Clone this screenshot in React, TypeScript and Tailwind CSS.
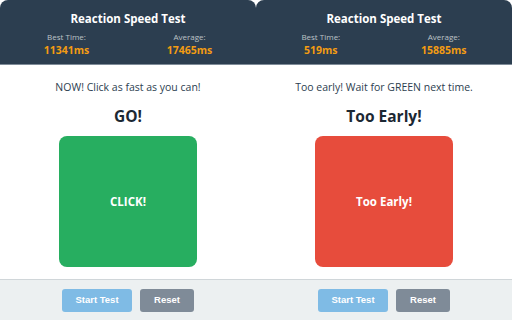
import React from "react";

type PanelProps = {
  best: string;
  avg: string;
  message: string;
  status: string;
  boxText: string;
  boxColor: string;
};

function Panel({ best, avg, message, status, boxText, boxColor }: PanelProps) {
  return (
    <div className="w-[256px] h-[320px] flex flex-col overflow-hidden" style={{ fontFamily: '"Open Sans", "Noto Sans", sans-serif' }}>
      <div className="h-[65px] shrink-0 bg-[#2c3e50] rounded-t-[8px] border-b border-[#7f8c99] flex flex-col items-center pt-[10px]">
        <div className="text-white font-bold text-[11.5px] leading-[18px]">Reaction Speed Test</div>
        <div className="w-full flex justify-around px-[5px] mt-[3px]">
          <div className="flex flex-col items-center">
            <div className="text-[#bdc3c7] text-[8px] leading-[11px]">Best Time:</div>
            <div className="text-[#f39c12] font-bold text-[10.5px] leading-[16px]">{best}</div>
          </div>
          <div className="flex flex-col items-center">
            <div className="text-[#bdc3c7] text-[8px] leading-[11px]">Average:</div>
            <div className="text-[#f39c12] font-bold text-[10.5px] leading-[16px]">{avg}</div>
          </div>
        </div>
      </div>
      <div className="h-[214px] shrink-0 bg-white flex flex-col items-center pt-[15px]">
        <div className="text-[#2c3e50] text-[10.5px] leading-[14px]">{message}</div>
        <div className="text-[#1c2833] font-bold text-[15.5px] leading-[20px] mt-[12px]">{status}</div>
        <div
          className={`mt-[10px] w-[138px] h-[131px] rounded-[8px] flex items-center justify-center text-white font-bold text-[11.5px] ${boxColor}`}
        >
          {boxText}
        </div>
      </div>
      <div className="flex-1 bg-[#ecf0f1] border-t border-[#d0d6d9] flex justify-center gap-[8px] pt-[9px]" style={{ fontFamily: '"Liberation Sans", Arial, sans-serif' }}>
        <div className="w-[70px] h-[23px] rounded-[3px] bg-[#7fbbe5] text-white font-bold text-[9.5px] flex items-center justify-center">Start Test</div>
        <div className="w-[54px] h-[23px] rounded-[3px] bg-[#7f8b98] text-white font-bold text-[9.5px] flex items-center justify-center">Reset</div>
      </div>
    </div>
  );
}

export default function App() {
  return (
    <div className="w-[512px] h-[320px] flex bg-white">
      <Panel
        best="11341ms"
        avg="17465ms"
        message="NOW! Click as fast as you can!"
        status="GO!"
        boxText="CLICK!"
        boxColor="bg-[#27ae60]"
      />
      <Panel
        best="519ms"
        avg="15885ms"
        message="Too early! Wait for GREEN next time."
        status="Too Early!"
        boxText="Too Early!"
        boxColor="bg-[#e74c3c]"
      />
    </div>
  );
}
